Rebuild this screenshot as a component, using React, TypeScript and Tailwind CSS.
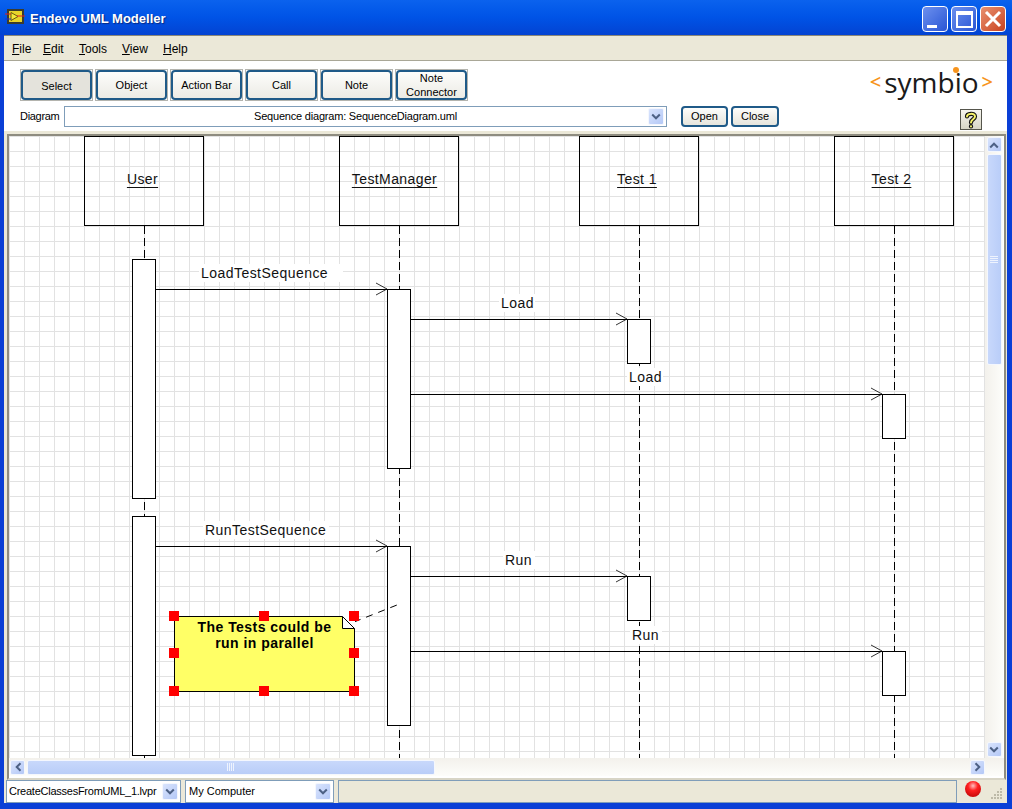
import React from "react";

const Chevron = ({ dir = "down" }: { dir?: "down" | "up" | "left" | "right" }) => {
  const rot = { down: 0, up: 180, left: 90, right: -90 }[dir];
  return (
    <svg width="10" height="8" viewBox="0 0 10 8" style={{ transform: `rotate(${rot}deg)` }}>
      <path d="M1.2 1.5 L5 5.3 L8.8 1.5" fill="none" stroke="#4d6185" strokeWidth="2" />
    </svg>
  );
};

const SmallBtn = ({ dir, className = "" }: { dir: "down" | "up" | "left" | "right"; className?: string }) => (
  <div className={`flex items-center justify-center rounded-[2px] border border-[#f4f7fe] bg-gradient-to-br from-[#d9e4fd] to-[#b4c8f6] ${className}`}>
    <Chevron dir={dir} />
  </div>
);

const ToolBtn = ({ label, active }: { label: React.ReactNode; active?: boolean }) => (
  <div className="h-[32px] w-[73px] border border-[#b4b4ae] bg-white">
    <div
      className={`flex h-full w-full items-center justify-center rounded-[4px] border-2 border-[#1f5a88] text-center text-[11px] leading-[14px] text-black ${
        active ? "bg-[#e4e3dc] pt-[2px]" : "bg-gradient-to-b from-[#fdfdfb] to-[#ecebe5]"
      }`}
    >
      {label}
    </div>
  </div>
);

const SmallPush = ({ label, w }: { label: string; w: string }) => (
  <div className={`flex h-[21px] items-center justify-center rounded-[4px] border-2 border-[#1f5a88] bg-gradient-to-b from-[#fdfdfb] to-[#e6e5dd] text-[11px] text-black ${w}`}>
    {label}
  </div>
);

const Combo = ({ text, className, center, tracking = "" }: { text: string; className: string; center?: boolean; tracking?: string }) => (
  <div className={`flex items-center border border-[#7f9db9] bg-white pl-[3px] pr-[2px] text-[11px] text-black ${className}`}>
    <span className={`flex-1 whitespace-nowrap ${tracking} ${center ? "text-center" : ""}`}>{text}</span>
    <SmallBtn dir="down" className="h-[17px] w-[16px]" />
  </div>
);

const O = { x: 9, y: 136 };

const Actor = ({ x, label, shift }: { x: number; label: string; shift: number }) => (
  <div
    className="absolute flex h-[90px] w-[120px] items-center justify-center border border-black bg-transparent pb-[3px] text-[14px] tracking-[0.4px] text-[#111] underline underline-offset-[3px]"
    style={{ left: x - O.x, top: 136 - O.y, paddingRight: shift }}
  >
    {label}
  </div>
);

const Bar = ({ x, y, w = 24, h }: { x: number; y: number; w?: number; h: number }) => (
  <div className="absolute border border-black bg-white" style={{ left: x - O.x, top: y - O.y, width: w, height: h }} />
);

const Label = ({ x, y, text, w }: { x: number; y: number; text: string; w: number }) => (
  <div
    className="absolute whitespace-nowrap bg-white pl-[2px] text-left text-[14px] leading-[18px] tracking-[0.45px] text-[#111]"
    style={{ left: x - O.x, top: y - 9 - O.y, width: w }}
  >
    {text}
  </div>
);

const Handle = ({ cx, cy }: { cx: number; cy: number }) => (
  <div className="absolute h-[10px] w-[10px] bg-[#ff0000]" style={{ left: cx - 5 - O.x, top: cy - 5 - O.y }} />
);

const arrows = [
  [156, 387, 289],
  [411, 627, 319],
  [411, 882, 394],
  [156, 387, 546],
  [411, 627, 576],
  [411, 882, 651],
];

const LifeLines = () => (
  <svg className="absolute left-0 top-0" width="976" height="622" viewBox="9 136 976 622">
    {[144, 399, 639, 894].map((x) => (
      <line key={x} x1={x + 0.5} x2={x + 0.5} y1={226} y2={758} stroke="#000" strokeWidth="1" strokeDasharray="8 4" />
    ))}
  </svg>
);

const Arrows = () => (
  <svg className="absolute left-0 top-0" width="976" height="622" viewBox="9 136 976 622">
    {arrows.map(([a, b, y], i) => (
      <g key={i} stroke="#000" fill="none">
        <line x1={a} x2={b} y1={y + 0.5} y2={y + 0.5} strokeWidth="1" />
        <path d={`M${b - 11} ${y - 6} L${b} ${y} L${b - 11} ${y + 6}`} strokeWidth="0.8" />
      </g>
    ))}
    <line x1={354} y1={622} x2={397} y2={605} stroke="#000" strokeWidth="1" strokeDasharray="7 6" />
    <path d="M342 616 L355 629 L355 616 Z" fill="#fff" />
    <path d="M342.5 616.5 L342.5 628.5 L354.5 628.5 Z" fill="#fff" stroke="#000" strokeWidth="1" />
  </svg>
);

const LvIcon = () => (
  <svg className="mb-[4px]" width="20" height="16" viewBox="0 0 20 16">
    <rect x="2" y="0" width="17" height="15" fill="#3b3b2e" />
    <rect x="4" y="2" width="13" height="11" fill="#e8d42a" />
    <path d="M6 3.5 L13 7.5 L6 11.5 Z" fill="#f5e93a" stroke="#6b5a10" strokeWidth="1" />
    <line x1="0" x2="6" y1="5" y2="5" stroke="#e02020" />
    <line x1="0" x2="6" y1="10" y2="10" stroke="#1c2fd8" />
    <line x1="12" x2="20" y1="7" y2="7" stroke="#e02020" />
  </svg>
);

const HelpIcon = () => (
  <svg width="14" height="18" viewBox="0 0 14 18">
    <g fill="none" strokeLinecap="round">
      <path d="M3 5.5 C3 2.5 11 1.5 11 5.5 C11 8.5 7 8 7 11.5" stroke="#111" strokeWidth="4.2" />
      <path d="M7 15.2 L7 15.4" stroke="#111" strokeWidth="4.2" />
      <path d="M3 5.5 C3 2.5 11 1.5 11 5.5 C11 8.5 7 8 7 11.5" stroke="#f6f36a" strokeWidth="2" />
      <path d="M7 15.2 L7 15.4" stroke="#f6f36a" strokeWidth="2" />
    </g>
  </svg>
);

const WinBtn = ({ bg, children }: { bg: string; children: React.ReactNode }) => (
  <div className={`flex h-[26px] w-[26px] items-center justify-center rounded-[4px] border border-white ${bg}`}>{children}</div>
);

const Grip = ({ vertical }: { vertical?: boolean }) =>
  vertical ? (
    <svg width="8" height="8" viewBox="0 0 8 8">
      {[1, 3, 5, 7].map((y) => (
        <line key={y} x1="0" x2="8" y1={y - 0.5} y2={y - 0.5} stroke="#eef3fe" />
      ))}
    </svg>
  ) : (
    <svg width="8" height="8" viewBox="0 0 8 8">
      {[1, 3, 5, 7].map((x) => (
        <line key={x} y1="0" y2="8" x1={x - 0.5} x2={x - 0.5} stroke="#eef3fe" />
      ))}
    </svg>
  );

export default function App() {
  return (
    <div
      className="flex h-[809px] w-[1012px] flex-col overflow-hidden bg-[#0a3fd6]"
      style={{ fontFamily: '"Liberation Sans", Arial, sans-serif' }}
    >
      {/* title bar */}
      <div className="flex h-[35px] items-center bg-gradient-to-b from-[#0b62ee] via-[#0053e6] to-[#0343d2] pl-[5px] pr-[6px] pt-[3px]">
        <LvIcon />
        <span className="ml-[5px] flex-1 text-[13px] font-bold text-white [text-shadow:1px_1px_1px_#0a2a80]">
          Endevo UML Modeller
        </span>
        <div className="flex gap-[3px]">
          <WinBtn bg="bg-gradient-to-br from-[#6d90ee] to-[#2a54d4]">
            <div className="mt-[14px] mr-[6px] h-[3px] w-[10px] bg-white" />
          </WinBtn>
          <WinBtn bg="bg-gradient-to-br from-[#6d90ee] to-[#2a54d4]">
            <div className="h-[17px] w-[17px] border-[2px] border-t-[4px] border-white" />
          </WinBtn>
          <WinBtn bg="bg-gradient-to-br from-[#e8906f] to-[#c8401c]">
            <svg width="18" height="18" viewBox="0 0 18 18">
              <path d="M2 2 L16 16 M16 2 L2 16" stroke="#fff" strokeWidth="3" />
            </svg>
          </WinBtn>
        </div>
      </div>

      {/* body */}
      <div className="ml-[4px] mr-[5px] flex h-[768px] flex-col bg-[#ebe8d8]">
        {/* menu */}
        <div className="flex h-[26px] items-center gap-[14px] border-b border-t border-b-[#a9a797] border-t-[#8a8778] bg-[#ebe8d8] pl-[8px] pt-[2px] text-[12px] text-black">
          <span className="w-[17px]"><u>F</u>ile</span>
          <span className="w-[22px]"><u>E</u>dit</span>
          <span className="w-[29px]"><u>T</u>ools</span>
          <span className="w-[27px]"><u>V</u>iew</span>
          <span><u>H</u>elp</span>
        </div>

        {/* toolbar */}
        <div className="flex h-[70px] bg-white">
          <div className="flex-1 pl-[16px] pt-[8px]">
            <div className="flex gap-[2px]">
              <ToolBtn label="Select" active />
              <ToolBtn label="Object" />
              <ToolBtn label="Action Bar" />
              <ToolBtn label="Call" />
              <ToolBtn label="Note" />
              <ToolBtn label={<span>Note<br />Connector</span>} />
            </div>
            <div className="mt-[5px] flex items-center">
              <span className="w-[44px] text-[11px] tracking-[-0.3px] text-black">Diagram</span>
              <Combo text="Sequence diagram: SequenceDiagram.uml" className="h-[21px] w-[603px]" center tracking="pr-[5px] tracking-[-0.2px]" />
              <div className="ml-[14px] flex gap-[3px]">
                <SmallPush label="Open" w="w-[47px]" />
                <SmallPush label="Close" w="w-[48px]" />
              </div>
            </div>
          </div>
          <div className="flex w-[140px] flex-col items-end pr-[14px]">
            <div
              className="relative mt-[3px] flex h-[36px] items-center text-[#1a1a1a]"
              style={{ fontFamily: '"Open Sans", sans-serif' }}
            >
              <span className="mr-[3px] text-[20px] font-semibold text-[#f7941d]">&lt;</span>
              <span className="text-[28px] font-medium">symbio</span>
              <span className="ml-[3px] text-[20px] font-semibold text-[#f7941d]">&gt;</span>
              <span className="absolute left-[83px] top-[3px] h-[6px] w-[6px] rounded-full bg-[#f7941d]" />
            </div>
            <div className="mr-[11px] mt-[9px] flex h-[21px] w-[22px] items-center justify-center border border-[#55554c] bg-gradient-to-b from-[#f6f5ef] to-[#d8d6c6]">
              <HelpIcon />
            </div>
          </div>
        </div>

        {/* canvas frame */}
        <div className="ml-[3px] mr-[1px] mt-[3px] flex h-[646px] flex-col border-[2px] border-[#8e8c80] border-b-[#d8d5c6] bg-white">
          <div className="flex h-[622px]">
            <div className="relative h-[622px] w-[976px] overflow-hidden bg-white bg-[linear-gradient(to_right,#e2e2e2_1px,transparent_1px),linear-gradient(to_bottom,#e2e2e2_1px,transparent_1px)] bg-[length:15px_15px]">
              <LifeLines />
              <Actor x={84} label="User" shift={3} />
              <Actor x={339} label="TestManager" shift={9} />
              <Actor x={579} label="Test 1" shift={4} />
              <Actor x={834} label="Test 2" shift={5} />
              <Bar x={132} y={259} h={240} />
              <Bar x={132} y={516} h={240} />
              <Bar x={387} y={289} h={180} />
              <Bar x={387} y={546} h={180} />
              <Bar x={627} y={319} h={45} />
              <Bar x={627} y={576} h={45} />
              <Bar x={882} y={394} h={45} />
              <Bar x={882} y={651} h={45} />
              <Label x={199} y={273} w={144} text="LoadTestSequence" />
              <Label x={499} y={303} w={36} text="Load" />
              <Label x={627} y={377} w={36} text="Load" />
              <Label x={203} y={530} w={126} text="RunTestSequence" />
              <Label x={503} y={560} w={32} text="Run" />
              <Label x={630} y={635} w={32} text="Run" />
              <div
                className="absolute flex h-[76px] w-[181px] flex-col items-center border border-black bg-[#ffff66] pt-[2px] text-[14px] font-bold leading-[16px] tracking-[0.45px] text-black"
                style={{ left: 174 - O.x, top: 616 - O.y }}
              >
                <span>The Tests could be</span>
                <span>run in parallel</span>
              </div>
              <Arrows />
              {[
                [174, 616], [264, 616], [354, 616],
                [174, 653], [354, 653],
                [174, 691], [264, 691], [354, 691],
              ].map(([cx, cy]) => (
                <Handle key={`${cx}-${cy}`} cx={cx} cy={cy} />
              ))}
            </div>
            {/* vertical scrollbar */}
            <div className="flex w-[18px] flex-col items-center bg-gradient-to-r from-[#f3f1ec] to-[#fdfdfa] pt-[1px]">
              <SmallBtn dir="up" className="h-[15px] w-[15px]" />
              <div className="mt-[2px] flex h-[211px] w-[15px] items-center justify-center rounded-[2px] border border-[#f4f7fe] bg-gradient-to-r from-[#c8d8fb] to-[#b9cdf8]">
                <Grip vertical />
              </div>
              <div className="flex-1" />
              <SmallBtn dir="down" className="mb-[1px] h-[15px] w-[15px]" />
            </div>
          </div>
          {/* horizontal scrollbar */}
          <div className="flex h-[18px] items-center bg-gradient-to-b from-[#f3f1ec] to-[#fdfdfa] pl-[1px]">
            <SmallBtn dir="left" className="h-[15px] w-[15px]" />
            <div className="ml-[2px] flex h-[15px] w-[408px] items-center justify-center rounded-[2px] border border-[#f4f7fe] bg-gradient-to-b from-[#c8d8fb] to-[#b9cdf8]">
              <Grip />
            </div>
            <div className="flex-1" />
            <SmallBtn dir="right" className="mr-[19px] h-[15px] w-[15px]" />
          </div>
        </div>

        {/* status bar */}
        <div className="flex flex-1 items-center gap-[4px] pl-[2px]">
          <Combo text="CreateClassesFromUML_1.lvpr" className="h-[23px] w-[175px]" tracking="-ml-[1px] tracking-[-0.25px]" />
          <Combo text="My Computer" className="h-[23px] w-[149px]" />
          <div className="h-[23px] w-[619px] border border-[#7f9db9] bg-[#ebe8d8]" />
          <div className="mb-[5px] ml-[4px] h-[16px] w-[16px] rounded-full bg-[radial-gradient(circle_at_50%_30%,#ffc0c0_0%,#ff2020_35%,#b00000_100%)]" />
          <svg className="ml-[6px] mt-[4px]" width="12" height="12" viewBox="0 0 12 12">
            {[[9, 0], [6, 3], [9, 3], [3, 6], [6, 6], [9, 6], [0, 9], [3, 9], [6, 9], [9, 9]].map(([x, y]) => (
              <rect key={`${x}-${y}`} x={x} y={y} width="2" height="2" fill="#bdbaa8" />
            ))}
          </svg>
        </div>
      </div>
    </div>
  );
}
